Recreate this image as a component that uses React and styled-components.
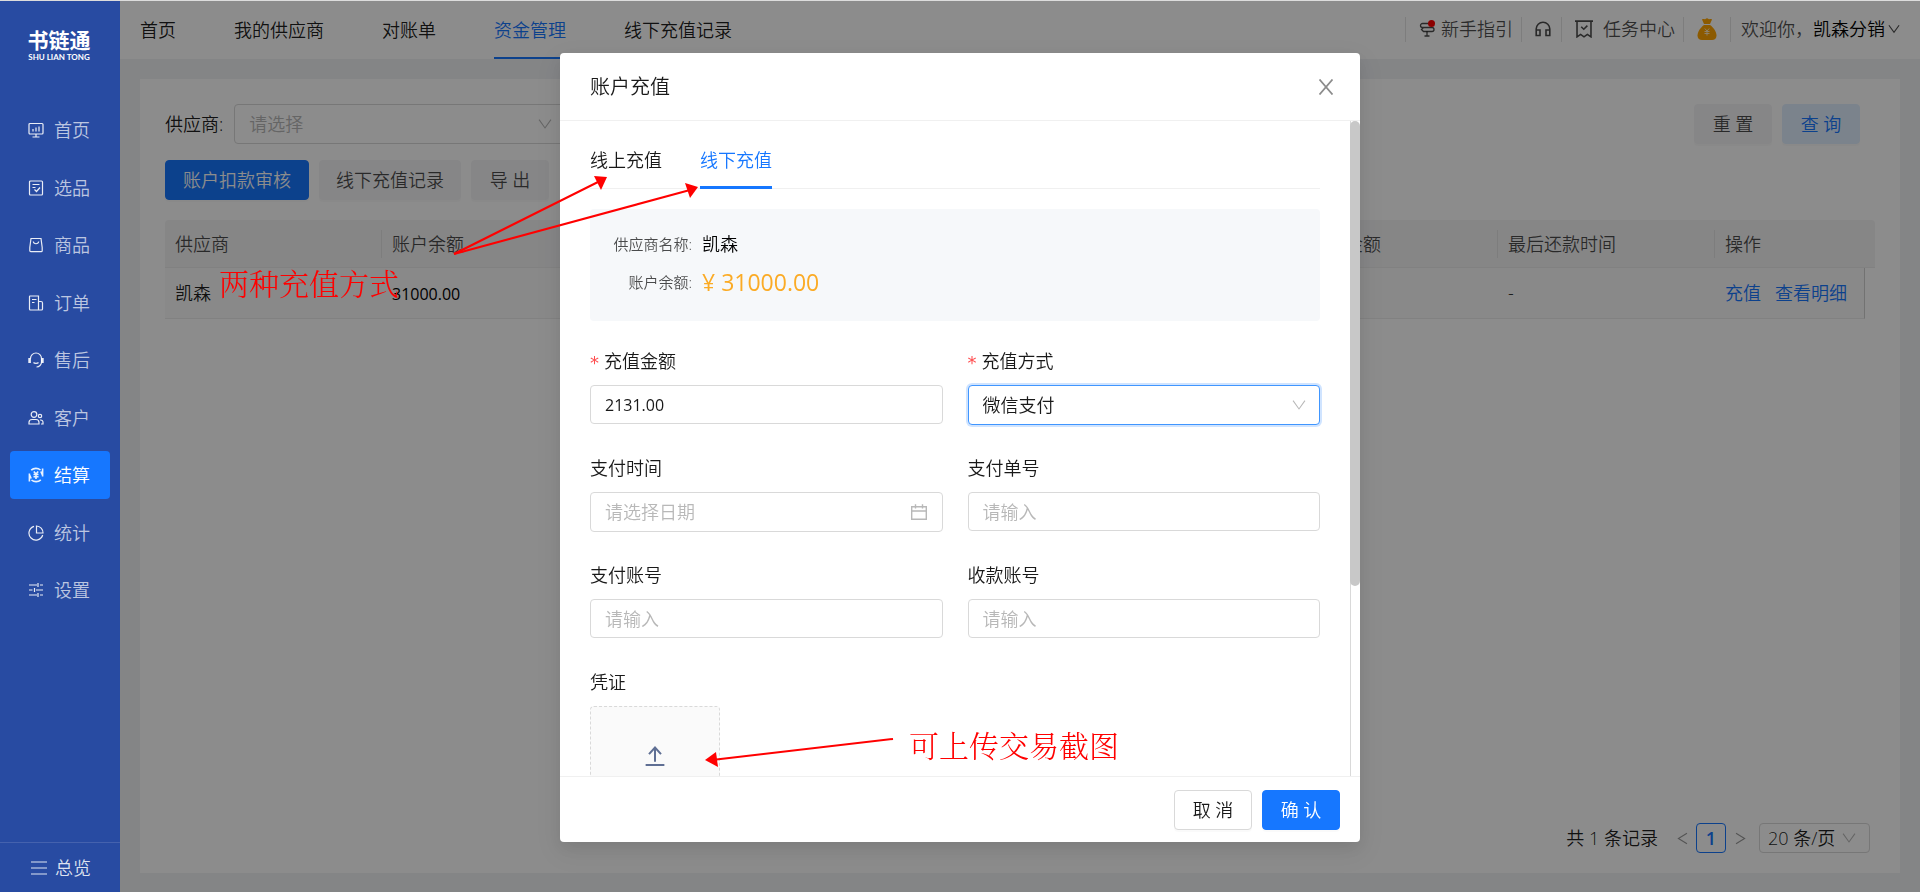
import React from 'react'
import styled, { createGlobalStyle } from 'styled-components'

const MENU = [
    { name: '首页', icon: 'screen' },
    { name: '选品', icon: 'pick' },
    { name: '商品', icon: 'goods' },
    { name: '订单', icon: 'order' },
    { name: '售后', icon: 'service' },
    { name: '客户', icon: 'users' },
    { name: '结算', icon: 'settle' },
    { name: '统计', icon: 'pie' },
    { name: '设置', icon: 'sliders' },
]

const TABS = ['首页', '我的供应商', '对账单', '资金管理', '线下充值记录']

const COLUMNS = [
    { title: '供应商', width: 217 },
    { title: '账户余额', width: 217 },
    { title: '' },
    { title: '最近还款金额', width: 235 },
    { title: '最后还款时间', width: 217 },
    { title: '操作', width: 150 },
]

const ICONS = {
    screen: (
        <>
            <rect x="1" y="1.5" width="14" height="10.5" rx="1" />
            <path d="M5 9.5V7M8 9.5V5.5M11 9.5V4.5M8 12v2.5M4.5 15h7" />
        </>
    ),
    pick: (
        <>
            <rect x="1.5" y="1" width="13" height="14" rx="1" />
            <path d="M4.5 4.5h7M4.5 7.5h3M6.5 9.5l2 2 3.5-4" />
        </>
    ),
    goods: (
        <>
            <path d="M3 1.5h10l1.2 9v3.2a1 1 0 0 1-1 1H2.8a1 1 0 0 1-1-1v-3.2z" />
            <path d="M5.3 4.5c.4 3 5 3 5.4 0" />
        </>
    ),
    order: (
        <path d="M2 1h8.5v14h-8a1 1 0 0 1-1-1V1.5A.5.5 0 0 1 2 1zM10.5 6.5H13A1.5 1.5 0 0 1 14.5 8v6a1 1 0 0 1-1 1h-3M4 4.5h4.5M4 7.5h2.5" />
    ),
    service: (
        <>
            <path d="M2.5 6.5a5.5 5.5 0 0 1 11 0V10a5 5 0 0 1-5 5" />
            <path d="M5.5 10.5c1 1.2 4 1.2 5 0" />
            <path d="M1.6 6v5M14.4 6v5" strokeWidth="2.6" />
        </>
    ),
    users: (
        <>
            <circle cx="6" cy="4.5" r="2.8" />
            <path d="M1 14v-1.5a3 3 0 0 1 3-3h4a3 3 0 0 1 3 3V14z" />
            <circle cx="12" cy="6" r="1.7" />
            <path d="M12 10h.8a2.2 2.2 0 0 1 2.2 2.2V14h-2" />
        </>
    ),
    settle: (
        <>
            <path d="M3.2 3.2a7 7 0 0 1 9.3-.2M3.5 13a7 7 0 0 0 9.3-.2" strokeWidth="1.6" />
            <path d="M14.6 1.5v8M12.800 4.500l1.800 4M1.400 14.500v-8M3.200 11.500l-1.800-4" strokeWidth="1.6" />
            <path d="M5.8 4.5L8 7l2.200-2.500M5.500 7.500h5M5.500 9.800h5M8 7v5" strokeWidth="1.6" />
        </>
    ),
    pie: (
        <>
            <path d="M6 1.3A7 7 0 1 0 14.7 10" />
            <path d="M8.5 1v7H15a6.8 6.8 0 0 0-6.500-7z" />
        </>
    ),
    sliders: (
        <path d="M1 3h8M12 3h3M10 1v4M1 8h3.500M8 8h7M6.500 6v4M1 13h8M12 13h3M10 11v4" />
    ),
    menu: <path d="M0 2h16M0 8h16M0 14h16" />,
    sign: (
        <>
            <path d="M11 2.500H3.500a2 2 0 0 0 0 4H13a2 2 0 0 1 0 4H4.500L2.500 8.500l2-2" />
            <path d="M8 10.500v4.500M5.500 15h5" />
        </>
    ),
    headset: (
        <path d="M1.200 14.500V8a6.800 6.800 0 0 1 13.600 0v6.500M1.200 9h3.800v5.500H1.200zM11 9h3.800v5.500H11z" />
    ),
    task: (
        <>
            <path d="M0 1h16M1.800 1v14l3.200-2.200 3 2.200 3-2.200 3.200 2.200V1" />
            <path d="M5.500 6l2.300 2.200L11 5" />
        </>
    ),
    down: <path d="M1.200 3L8 12.500 14.800 3" />,
    left: <path d="M13.500 1.500L3 8l10.500 6.500" />,
    right: <path d="M2.500 1.500L13 8 2.500 14.500" />,
    close: <path d="M1.500.5l13 15M14.500.5l-13 15" />,
    calendar: <path d="M.7 2.800h14.600v12.500H.7zM.7 7h14.600M4.500.2v4.300M11.500.2v4.300" />,
    upload: (
        <>
            <path d="M8 12.500V1.500M3.200 6.500L8 1.200l4.800 5.300" />
            <path d="M.5 15.200h15" />
        </>
    ),
}

function Icon({ name, size = 16, line = 1.2 }) {
    return (
        <svg width={size} height={size} viewBox="0 0 16 16" fill="none" stroke="currentColor" strokeWidth={line} aria-hidden="true">
            {ICONS[name]}
        </svg>
    )
}

function MoneyBag() {
    return (
        <svg width="20" height="22" viewBox="0 0 20 22" aria-hidden="true">
            <path d="M5 1.500c1.500-1.200 2.500.3 3.500-.6 1-.9 2-.9 3 0s2-.6 3.500.6L13 6H7z" fill="#ffa500" />
            <path d="M7 7h6c3 2 6.500 6.500 6.500 10.500 0 3-2 4.500-4.500 4.500H5c-2.500 0-4.500-1.500-4.500-4.500C.5 13.500 4 9 7 7z" fill="#ffa500" />
            <path d="M7.800 10.500l2.200 2.500 2.200-2.500M7.500 13.500h5M7.500 15.500h5M10 13v4.500" fill="none" stroke="#ffe9bf" strokeWidth="1" />
        </svg>
    )
}

function Sidebar() {
    return (
        <Side>
            <Logo>
                <LogoName>书链通</LogoName>
                <LogoSub>SHU LIAN TONG</LogoSub>
            </Logo>
            <Menu>
                {MENU.map((item) => (
                    <MenuItem href="#" key={item.name} $active={item.name === '结算'}>
                        <Icon name={item.icon} />
                        {item.name}
                    </MenuItem>
                ))}
            </Menu>
            <Overview>
                <Icon name="menu" />
                总览
            </Overview>
        </Side>
    )
}

function Header() {
    return (
        <TopBar>
            <TopNav>
                {TABS.map((tab) => (
                    <TopTab href="#" key={tab} $active={tab === '资金管理'}>{tab}</TopTab>
                ))}
            </TopNav>
            <Tools>
                <Tool $end={8}>
                    <SignIcon>
                        <Icon name="sign" line={1.3} />
                        <Dot />
                    </SignIcon>
                    新手指引
                </Tool>
                <Tool $end={10}><Icon name="headset" line={1.6} /></Tool>
                <Tool $end={8} $gap={10}><Icon name="task" size={18} line={1.4} />任务中心</Tool>
                <Tool $end={13}><MoneyBag /></Tool>
                <Tool $start={10} $gap={0}>
                    欢迎你，
                    <UserName>凯森分销<Icon name="down" size={12} line={1.5} /></UserName>
                </Tool>
            </Tools>
        </TopBar>
    )
}

function Pager() {
    return (
        <Pagination>
            <Total>共 1 条记录</Total>
            <PageArrow type="button" aria-label="上一页"><Icon name="left" size={13} line={1.4} /></PageArrow>
            <PageNum type="button">1</PageNum>
            <PageArrow type="button" aria-label="下一页"><Icon name="right" size={13} line={1.4} /></PageArrow>
            <PageSize>
                <select aria-label="每页条数"><option>20 条/页</option></select>
                <Icon name="down" size={14} />
            </PageSize>
        </Pagination>
    )
}

function Main() {
    return (
        <Panel>
            <Filter>
                <label htmlFor="supplier">供应商:</label>
                <Picker $width={332} $muted>
                    <select id="supplier"><option>请选择</option></select>
                    <Icon name="down" size={14} />
                </Picker>
                <FilterButtons>
                    <Button type="button" $kind="soft">重 置</Button>
                    <Button type="button" $kind="light">查 询</Button>
                </FilterButtons>
            </Filter>
            <Actions>
                <Button type="button" $kind="primary">账户扣款审核</Button>
                <Button type="button" $kind="soft">线下充值记录</Button>
                <Button type="button" $kind="soft">导 出</Button>
            </Actions>
            <Table>
                <colgroup>
                    {COLUMNS.map((col) => <col key={col.title} width={col.width} />)}
                    <col width={10} />
                </colgroup>
                <thead>
                    <tr>
                        {COLUMNS.map((col) => <th key={col.title}><span>{col.title}</span></th>)}
                        <th aria-hidden="true" />
                    </tr>
                </thead>
                <tbody>
                    <tr>
                        <td>凯森</td>
                        <td><Num>31000.00</Num></td>
                        <td />
                        <td />
                        <td>-</td>
                        <td>
                            <Links>
                                <a href="#">充值</a>
                                <a href="#">查看明细</a>
                            </Links>
                        </td>
                    </tr>
                </tbody>
            </Table>
            <Pager />
        </Panel>
    )
}

function Field({ id, label, required, children }) {
    return (
        <FieldBox>
            <FieldLabel htmlFor={id}>
                {required && <Star>*</Star>}
                {label}
            </FieldLabel>
            {children}
        </FieldBox>
    )
}

function RechargeModal() {
    return (
        <Modal role="dialog" aria-label="账户充值">
            <ModalHead>
                <h2>账户充值</h2>
                <Close type="button" aria-label="关闭"><Icon name="close" line={1.8} /></Close>
            </ModalHead>
            <ModalBody>
                <Content>
                    <ModalTabs>
                        <ModalTab type="button">线上充值</ModalTab>
                        <ModalTab type="button" $active>线下充值</ModalTab>
                    </ModalTabs>
                    <Info>
                        <dt>供应商名称:</dt>
                        <dd>凯森</dd>
                        <dt>账户余额:</dt>
                        <dd><Money>¥ 31000.00</Money></dd>
                    </Info>
                    <Form>
                        <Field id="amount" label="充值金额" required>
                            <Input id="amount" defaultValue="2131.00" $number />
                        </Field>
                        <Field id="method" label="充值方式" required>
                            <Picker $focus>
                                <select id="method"><option>微信支付</option></select>
                                <Icon name="down" size={14} />
                            </Picker>
                        </Field>
                        <Field id="date" label="支付时间">
                            <DateBox>
                                <Input id="date" placeholder="请选择日期" />
                                <Icon name="calendar" line={1.4} />
                            </DateBox>
                        </Field>
                        <Field id="payNo" label="支付单号">
                            <Input id="payNo" placeholder="请输入" />
                        </Field>
                        <Field id="payAccount" label="支付账号">
                            <Input id="payAccount" placeholder="请输入" />
                        </Field>
                        <Field id="account" label="收款账号">
                            <Input id="account" placeholder="请输入" />
                        </Field>
                        <Field id="voucher" label="凭证">
                            <Upload id="voucher" type="button" aria-label="上传凭证">
                                <Icon name="upload" size={20} line={1.6} />
                            </Upload>
                        </Field>
                    </Form>
                </Content>
                <Track><Thumb /></Track>
            </ModalBody>
            <ModalFoot>
                <Button type="button" $kind="plain">取 消</Button>
                <Button type="button" $kind="primary">确 认</Button>
            </ModalFoot>
        </Modal>
    )
}

// red arrows and remarks drawn over the page
function Notes() {
    return (
        <>
            <Arrows aria-hidden="true">
                <g stroke="#f00" strokeWidth="2">
                    <path d="M454 254L600 181" />
                    <path d="M454 254L690 190" />
                    <path d="M893 739L712 760" />
                </g>
                <g fill="#f00">
                    <path d="M607 177L594 176L601 190z" />
                    <path d="M698 187L685 183L690 198z" />
                    <path d="M705 760L716 752L718 767z" />
                </g>
            </Arrows>
            <Note $left={219} $top={260}>两种充值方式</Note>
            <Note $left={909} $top={722}>可上传交易截图</Note>
        </>
    )
}

function App() {
    return (
        <Page>
            <Global />
            <Sidebar />
            <Right>
                <Header />
                <Main />
            </Right>
            <Mask>
                <RechargeModal />
            </Mask>
            <Notes />
        </Page>
    )
}

export default App;


const Global = createGlobalStyle`
    * {
        box-sizing: border-box;
    }
    body {
        margin: 0;
        color: rgba(0, 0, 0, 0.9);
        font-size: 18px;
        line-height: 28px;
        font-weight: 350;
        font-family: "Open Sans", "Noto Sans CJK SC", sans-serif;
    }
    button, input, select {
        font: inherit;
        color: inherit;
    }
    button {
        cursor: pointer;
    }
    a {
        text-decoration: none;
    }
    svg {
        flex: none;
    }
`

const Page = styled.div`
    display: flex;
    min-height: 100vh;
    border-top: 1px solid #dcdcdc;
    background-color: #f0f2f5;
`

const Side = styled.aside`
    position: relative;
    z-index: 2;
    display: flex;
    flex-direction: column;
    flex: none;
    width: 120px;
    background-color: #284ba2;
    color: #fff;
`

const Logo = styled.div`
    display: flex;
    flex-direction: column;
    align-items: center;
    height: 105px;
    padding: 27px 2px 0 0;
`

const LogoName = styled.div`
    font-size: 21px;
    line-height: 24px;
    font-weight: 700;
`

const LogoSub = styled.div`
    font-family: "Lato", sans-serif;
    font-size: 8px;
    line-height: 10px;
    font-weight: 700;
`

const Menu = styled.nav`
    display: flex;
    flex-direction: column;
    justify-content: space-between;
    height: 508px;
    padding: 0 10px;
`

const MenuItem = styled.a`
    display: flex;
    align-items: center;
    gap: 10px;
    height: 48px;
    padding-left: 18px;
    border-radius: 4px;
    color: ${(p) => (p.$active ? '#fff' : 'rgba(255, 255, 255, 0.7)')};
    background-color: ${(p) => (p.$active ? '#1677ff' : 'transparent')};

    svg {
        color: rgba(255, 255, 255, 0.9);
    }
`

const Overview = styled.div`
    display: flex;
    align-items: center;
    gap: 8px;
    height: 50px;
    margin-top: auto;
    padding-left: 31px;
    border-top: 1px solid #4562ae;
    color: rgba(255, 255, 255, 0.85);
`

const Right = styled.div`
    display: flex;
    flex-direction: column;
    flex: 1;
    min-width: 0;
`

const TopBar = styled.header`
    display: flex;
    justify-content: space-between;
    height: 58px;
    padding: 0 20px;
    background-color: #fff;
`

const TopNav = styled.nav`
    display: flex;
    gap: 58px;
`

const TopTab = styled.a`
    display: flex;
    align-items: center;
    border-top: 2px solid transparent;
    border-bottom: 2px solid ${(p) => (p.$active ? '#1677ff' : 'transparent')};
    color: ${(p) => (p.$active ? '#1677ff' : 'rgba(0, 0, 0, 0.9)')};
`

const Tools = styled.div`
    display: flex;
    align-items: center;
    padding-bottom: 2px;
    color: rgba(0, 0, 0, 0.7);
`

const Tool = styled.div`
    display: flex;
    align-items: center;
    gap: ${(p) => p.$gap ?? 6}px;
    height: 25px;
    padding: 0 ${(p) => p.$end ?? 0}px 0 ${(p) => p.$start ?? 13}px;
    border-left: 1px solid #e4e4e4;
`

const SignIcon = styled.span`
    position: relative;
    display: flex;
`

const Dot = styled.i`
    position: absolute;
    top: -1px;
    right: 0;
    width: 7px;
    height: 7px;
    border-radius: 50%;
    background-color: #f00;
`

const UserName = styled.span`
    display: flex;
    align-items: center;
    gap: 3px;
    color: #000;

    svg {
        color: rgba(0, 0, 0, 0.7);
    }
`

const Panel = styled.main`
    display: flex;
    flex-direction: column;
    flex: 1;
    margin: 20px 20px 19px;
    padding: 25px 25px 20px;
    background-color: #fff;
`

const Filter = styled.div`
    display: flex;
    align-items: center;
    gap: 11px;
`

const FilterButtons = styled.div`
    display: flex;
    gap: 10px;
    margin-left: auto;
    padding-right: 15px;
`

const Picker = styled.div`
    position: relative;
    width: ${(p) => (p.$width ? p.$width + 'px' : '100%')};

    select {
        display: block;
        width: 100%;
        height: 40px;
        padding: 0 14px;
        border: 1px solid ${(p) => (p.$focus ? '#4096ff' : '#d9d9d9')};
        border-radius: 4px;
        background-color: #fff;
        color: ${(p) => (p.$muted ? '#b8b8b8' : 'rgba(0, 0, 0, 0.9)')};
        box-shadow: ${(p) => (p.$focus ? '0 0 0 2px rgba(22, 119, 255, 0.2)' : 'none')};
        appearance: none;
        outline: none;
    }

    svg {
        position: absolute;
        top: 13px;
        right: 14px;
        color: #b8b8b8;
    }
`

const KINDS = {
    primary: { bg: '#1677ff', color: '#fff', border: '#1677ff' },
    soft: { bg: '#f4f4f6', color: 'rgba(0, 0, 0, 0.7)', border: '#f4f4f6' },
    light: { bg: '#e0efff', color: '#1677ff', border: '#e0efff' },
    plain: { bg: '#fff', color: 'rgba(0, 0, 0, 0.9)', border: '#d9d9d9' },
}

const Button = styled.button`
    min-width: 78px;
    height: 40px;
    padding: 0 ${(p) => (p.$kind === 'soft' ? 16 : 17)}px;
    border: 1px solid ${(p) => KINDS[p.$kind].border};
    border-radius: 4px;
    background-color: ${(p) => KINDS[p.$kind].bg};
    color: ${(p) => KINDS[p.$kind].color};
    box-shadow: 0 2px 0 rgba(0, 0, 0, 0.02);
`

const Actions = styled.div`
    display: flex;
    gap: 10px;
    margin: 16px 0 20px;
`

const Table = styled.table`
    width: 100%;
    table-layout: fixed;
    border-collapse: separate;
    border-spacing: 0;

    th, td {
        padding: 0 0 0 10px;
        text-align: left;
        font-weight: 350;
        border-bottom: 1px solid #ececec;
    }
    th {
        height: 48px;
        background-color: #f4f4f5;
        color: rgba(0, 0, 0, 0.7);
    }
    th span {
        display: block;
        height: 28px;
        border-right: 1px solid #e4e4e4;
    }
    th:nth-last-child(2) span {
        border: none;
    }
    th:first-child {
        border-top-left-radius: 4px;
    }
    th:last-child {
        border-top-right-radius: 4px;
    }
    td {
        height: 51px;
        background-color: #fafafa;
    }
    td:last-child {
        border-right: 1px solid #d0d0d0;
    }
`

const Num = styled.span`
    font-size: 16px;
    font-weight: 400;
    color: #000;
`

const Links = styled.div`
    display: flex;
    gap: 14px;

    a {
        color: #1677ff;
    }
`

const Pagination = styled.div`
    display: flex;
    align-items: center;
    justify-content: flex-end;
    margin-top: auto;
    padding-right: 5px;
`

const Total = styled.span`
    margin-right: 12px;
`

const PageArrow = styled.button`
    display: flex;
    align-items: center;
    justify-content: center;
    width: 24px;
    height: 30px;
    padding: 0;
    border: none;
    background: none;
    color: rgba(0, 0, 0, 0.4);
`

const PageNum = styled.button`
    width: 30px;
    height: 30px;
    margin: 0 2px;
    padding: 0;
    border: 1px solid #1677ff;
    border-radius: 4px;
    background-color: #fff;
    color: #1677ff;
    font-weight: 600;
`

const PageSize = styled(Picker)`
    width: 111px;
    margin-left: 7px;

    select {
        height: 30px;
        padding: 0 8px;
    }
    svg {
        top: 8px;
    }
`

const Mask = styled.div`
    position: fixed;
    top: 1px;
    right: 0;
    bottom: 0;
    left: 0;
    z-index: 1;
    display: flex;
    justify-content: center;
    padding: 52px 0 50px;
    background-color: rgba(0, 0, 0, 0.45);
`

const Modal = styled.div`
    display: flex;
    flex-direction: column;
    width: 800px;
    border-radius: 4px;
    background-color: #fff;
    overflow: hidden;
    box-shadow: 0 6px 16px rgba(0, 0, 0, 0.08), 0 9px 28px 8px rgba(0, 0, 0, 0.05);
`

const ModalHead = styled.div`
    display: flex;
    align-items: center;
    justify-content: space-between;
    flex: none;
    height: 68px;
    padding: 0 26px 0 30px;
    border-bottom: 1px solid #f0f0f0;

    h2 {
        margin: 0;
        font-size: 20px;
        line-height: 30px;
        font-weight: 350;
    }
`

const Close = styled.button`
    display: flex;
    padding: 0;
    border: none;
    background: none;
    color: #8c8c8c;
`

const ModalBody = styled.div`
    display: flex;
    flex: 1;
    min-height: 0;
`

const Content = styled.div`
    flex: 1;
    padding: 10px 30px 0;
    overflow: hidden;
`

const Track = styled.div`
    width: 10px;
    border-left: 1px solid #d9d9d9;
`

const Thumb = styled.div`
    width: 10px;
    height: 71%;
    margin-left: -1px;
    border-radius: 5px;
    background-color: #c8c8c8;
`

const ModalTabs = styled.div`
    display: flex;
    gap: 38px;
    height: 58px;
    border-bottom: 1px solid #f0f0f0;
`

const ModalTab = styled.button`
    height: 58px;
    padding: 3px 0 0;
    border: none;
    border-bottom: 3px solid ${(p) => (p.$active ? '#1677ff' : 'transparent')};
    background: none;
    color: ${(p) => (p.$active ? '#1677ff' : 'rgba(0, 0, 0, 0.9)')};
`

const Info = styled.dl`
    display: grid;
    grid-template-columns: 80px 1fr;
    grid-auto-rows: 38px;
    align-items: center;
    column-gap: 10px;
    height: 112px;
    margin: 20px 0 26px;
    padding: 16px 22px;
    border-radius: 4px;
    background-color: #f6f8fa;

    dt {
        font-size: 15px;
        text-align: right;
        white-space: nowrap;
        color: rgba(0, 0, 0, 0.7);
    }
    dd {
        margin: 0;
        color: #000;
    }
`

const Money = styled.span`
    font-size: 23px;
    line-height: 32px;
    font-weight: 400;
    color: #fbab25;
`

const Form = styled.form`
    display: grid;
    grid-template-columns: 1fr 1fr;
    gap: 30px 25px;
`

const FieldBox = styled.div`
    display: flex;
    flex-direction: column;
    gap: 10px;
    height: 77px;
`

const FieldLabel = styled.label`
    display: flex;
    gap: 5px;
`

const Star = styled.span`
    height: 28px;
    font-family: "DejaVu Sans", sans-serif;
    font-weight: 400;
    line-height: 32px;
    color: #ff4d4f;
`

const Input = styled.input`
    width: 100%;
    height: 40px;
    padding: 0 14px;
    border: 1px solid #d9d9d9;
    border-radius: 4px;
    font-size: ${(p) => (p.$number ? 16 : 18)}px;
    font-weight: ${(p) => (p.$number ? 400 : 350)};
    outline: none;

    &::placeholder {
        color: #b8b8b8;
    }
`

const DateBox = styled.div`
    position: relative;

    svg {
        position: absolute;
        top: 12px;
        right: 16px;
        color: #b8b8b8;
    }
`

const Upload = styled.button`
    display: flex;
    align-items: center;
    justify-content: center;
    flex: none;
    width: 130px;
    height: 100px;
    padding: 0;
    border: 1px dashed #d9d9d9;
    border-radius: 4px;
    background-color: #fafafa;
    color: #5f6f94;
`

const ModalFoot = styled.div`
    display: flex;
    align-items: center;
    justify-content: flex-end;
    gap: 10px;
    flex: none;
    height: 66px;
    padding: 0 20px;
    border-top: 1px solid #f0f0f0;
`

const Arrows = styled.svg`
    position: fixed;
    top: 0;
    left: 0;
    z-index: 3;
    width: 100%;
    height: 100%;
    pointer-events: none;
`

const Note = styled.div`
    position: fixed;
    top: ${(p) => p.$top}px;
    left: ${(p) => p.$left}px;
    z-index: 3;
    font-family: "Noto Serif CJK SC", "Noto Sans CJK SC", serif;
    font-size: 30px;
    line-height: 44px;
    font-weight: 300;
    color: #f00;
`
